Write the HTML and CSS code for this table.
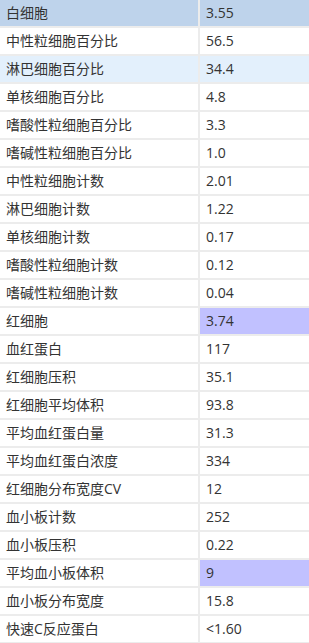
FILE: index.html
```html
<!DOCTYPE html>
<html lang="zh">
<head>
<meta charset="utf-8">
<link rel="stylesheet" href="styles.css">
</head>
<body>
<table class="results">
<tbody>
<tr class="row-head"><td class="name">白细胞</td><td class="val">3.55</td></tr>
<tr><td class="name">中性粒细胞百分比</td><td class="val">56.5</td></tr>
<tr class="row-sel"><td class="name">淋巴细胞百分比</td><td class="val">34.4</td></tr>
<tr><td class="name">单核细胞百分比</td><td class="val">4.8</td></tr>
<tr><td class="name">嗜酸性粒细胞百分比</td><td class="val">3.3</td></tr>
<tr><td class="name">嗜碱性粒细胞百分比</td><td class="val">1.0</td></tr>
<tr><td class="name">中性粒细胞计数</td><td class="val">2.01</td></tr>
<tr><td class="name">淋巴细胞计数</td><td class="val">1.22</td></tr>
<tr><td class="name">单核细胞计数</td><td class="val">0.17</td></tr>
<tr><td class="name">嗜酸性粒细胞计数</td><td class="val">0.12</td></tr>
<tr><td class="name">嗜碱性粒细胞计数</td><td class="val">0.04</td></tr>
<tr><td class="name">红细胞</td><td class="val flag">3.74</td></tr>
<tr><td class="name">血红蛋白</td><td class="val">117</td></tr>
<tr><td class="name">红细胞压积</td><td class="val">35.1</td></tr>
<tr><td class="name">红细胞平均体积</td><td class="val">93.8</td></tr>
<tr><td class="name">平均血红蛋白量</td><td class="val">31.3</td></tr>
<tr><td class="name">平均血红蛋白浓度</td><td class="val">334</td></tr>
<tr><td class="name">红细胞分布宽度CV</td><td class="val">12</td></tr>
<tr><td class="name">血小板计数</td><td class="val">252</td></tr>
<tr><td class="name">血小板压积</td><td class="val">0.22</td></tr>
<tr><td class="name">平均血小板体积</td><td class="val flag">9</td></tr>
<tr><td class="name">血小板分布宽度</td><td class="val">15.8</td></tr>
<tr><td class="name">快速C反应蛋白</td><td class="val">&lt;1.60</td></tr>
</tbody>
</table>
</body>
</html>
```

FILE: styles.css
```css
html, body {
  margin: 0;
  padding: 0;
  background: #ffffff;
}
.results {
  width: 309px;
  border-collapse: collapse;
  table-layout: fixed;
  font-family: "Open Sans", "Noto Sans CJK SC", sans-serif;
  font-size: 14px;
  color: #333333;
}
.results td {
  height: 26px;
  padding: 0 0 0 6px;
  border-bottom: 2px solid #ececec;
  vertical-align: middle;
  line-height: 26px;
  white-space: nowrap;
  box-sizing: border-box;
}
.results td.name {
  width: 199px;
  border-right: 2px solid #ececec;
}
.row-head td {
  background: #bed3eb;
}
.row-sel td {
  background: #e3f0fc;
}
.results td.flag {
  background: #c1c1ff;
}
```
